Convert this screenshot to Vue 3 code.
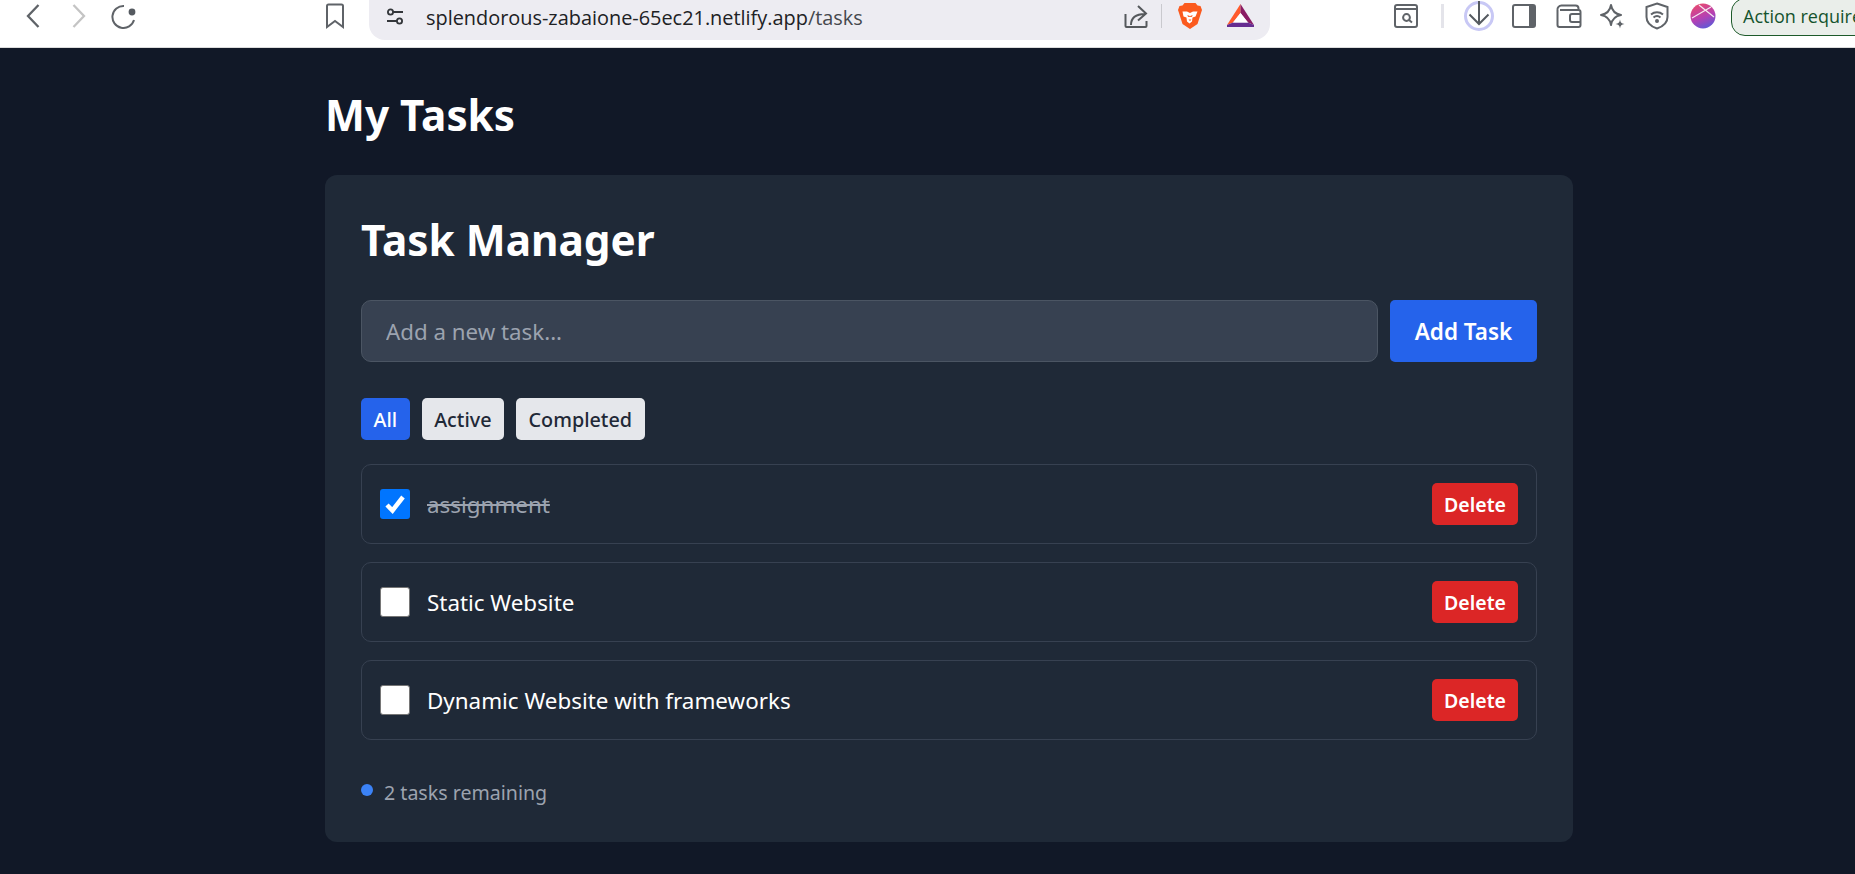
<script setup>
import { ref, computed } from 'vue';

const tasks = ref([
  { id: 1, title: 'assignment', done: true },
  { id: 2, title: 'Static Website', done: false },
  { id: 3, title: 'Dynamic Website with frameworks', done: false },
]);
const filters = ['All', 'Active', 'Completed'];
const remaining = computed(() => tasks.value.filter((t) => !t.done).length);
</script>

<template>
  <div class="page">
    <header class="chrome">
      <svg class="ic back" width="14" height="26" viewBox="0 0 14 26"><path d="M12.500 2 2 13l10.500 11" /></svg>
      <svg class="ic fwd" width="14" height="26" viewBox="0 0 14 26"><path d="M1.500 2 12 13 1.500 24" /></svg>
      <svg class="ic reload" width="26" height="26" viewBox="0 0 26 26">
        <path d="M24 17A11 11 0 1 1 14 3" />
        <circle cx="22" cy="9" r="3.400" fill="#555a60" stroke="none" />
      </svg>
      <svg class="ic mark" width="20" height="26" viewBox="0 0 20 26"><path d="M2 3a1.500 1.500 0 0 1 1.500-1.500h13A1.500 1.500 0 0 1 18 3v21l-8-6-8 6z" /></svg>
      <div class="omnibox">
        <svg class="ic tune" width="20" height="18" viewBox="0 0 20 18">
          <circle cx="5.500" cy="4" r="2.600" /><path d="M8 4h10M2 13h10" /><circle cx="14.500" cy="13" r="2.600" />
        </svg>
        <span class="url">splendorous-zabaione-65ec21.netlify.app<span class="url-path">/tasks</span></span>
        <svg class="ic share" width="24" height="26" viewBox="0 0 24 26">
          <path d="M1.500 10v12a1 1 0 0 0 1 1h19a1 1 0 0 0 1-1v-5M7 21c0-7 4-11 14-11M14 2l8 7.500-8 7" />
        </svg>
        <i class="sep"></i>
        <svg class="brave" width="24" height="28" viewBox="0 0 24 28">
          <path d="M6.500 1h11l2 2.500L22.500 4 24 8l-1 3-3.500 11-7.500 5-7.500-5L1 11 0 8l1.500-4 3 -.5z" fill="#fb5a1e" />
          <path d="M4.500 9.500 9 9.500l3 1.500 3-1.500 4.500 0-2 5-3 1-.5 4-2.500 2-2.500-2-.5-4-3-1z" fill="#fff" />
          <path d="M9 13.500h2l1 1 1-1h2l-1.500 1.500h-3zM10.500 17.500h3L12 19z" fill="#fb5a1e" />
        </svg>
        <svg class="bat" width="27" height="24" viewBox="0 0 27 24">
          <path d="M13.500 0 0 21l6-2.500 7.500-9.500z" fill="#ff5a2c" />
          <path d="M13.500 0 27 21l-6-2.500-7.500-9.500z" fill="#8a1c64" />
          <path d="M0 21l6-2.500h15l6 2.500v2H0z" fill="#662d91" />
          <path d="M13.500 9 21 18.500H6z" fill="#fff" />
        </svg>
      </div>
      <svg class="ic tabsearch" width="24" height="24" viewBox="0 0 24 24">
        <rect x="1" y="1" width="22" height="22" rx="2" /><path d="M1 5h22" /><circle cx="12.500" cy="13.500" r="3.400" /><path d="m15 16 3 2.500" />
      </svg>
      <i class="sep sep-light"></i>
      <svg class="download" width="30" height="30" viewBox="0 0 30 30">
        <circle cx="15" cy="15" r="13.500" fill="none" stroke="#c8c8f5" stroke-width="3" />
        <path d="M15 0v23M5.500 13.500 15 23l9.500-9.500" fill="none" stroke="#555a60" stroke-width="2" />
      </svg>
      <svg class="sidebar" width="24" height="24" viewBox="0 0 24 24">
        <rect x="1" y="1" width="22" height="22" rx="2" fill="#fff" stroke="#5f6368" stroke-width="2" />
        <path d="M17 1h4a2 2 0 0 1 2 2v18a2 2 0 0 1-2 2h-4z" fill="#5f6368" />
      </svg>
      <svg class="ic wallet" width="26" height="24" viewBox="0 0 26 24">
        <path d="M1.500 6a4 4 0 0 1 4-4.500h14a3 3 0 0 1 3 3V6M1.500 6v15a2 2 0 0 0 2 2h19a2 2 0 0 0 2-2V8a2 2 0 0 0-2-2H4M24.500 10H16a2 2 0 0 0-2 2v4a2 2 0 0 0 2 2h8.500" />
      </svg>
      <svg class="ic star" width="28" height="28" viewBox="0 0 28 28">
        <path d="M12 2c1 6 4 9 10 10-6 1-9 4-10 10-1-6-4-9-10-10 6-1 9-4 10-10z" stroke-linejoin="round" />
        <circle cx="21" cy="21" r="5.500" fill="#fff" stroke="none" />
        <path d="M21 16.500c.5 3 1.500 4 4.500 4.500-3 .5-4 1.500-4.500 4.500-.5-3-1.500-4-4.500-4.500 3-.5 4-1.500 4.500-4.500z" fill="#5f6368" stroke="none" />
      </svg>
      <svg class="ic shield" width="24" height="28" viewBox="0 0 24 28">
        <path d="M12 1.500 22.500 5v10c0 6-4.500 9.500-10.500 11.500C6 24.500 1.500 21 1.500 15V5z" />
        <path d="M6 12.500c3.500-3 8.500-3 12 0M8.500 15.500c2-1.700 5-1.700 7 0" /><circle cx="12" cy="19" r="1" fill="#5f6368" />
      </svg>
      <svg class="avatar" width="26" height="26" viewBox="0 0 26 26">
        <defs>
          <linearGradient id="ava" x1=".3" y1="0" x2=".7" y2="1">
            <stop offset="0" stop-color="#e84a70" /><stop offset=".55" stop-color="#b440b4" /><stop offset="1" stop-color="#5a5ad8" />
          </linearGradient>
        </defs>
        <circle cx="13" cy="13" r="12.500" fill="url(#ava)" />
        <path d="M2 15 21 4M9 2l15 12" stroke="#f5e9f0" stroke-width="1.200" />
      </svg>
      <div class="action">Action required</div>
    </header>

    <main class="main">
      <h1 class="page-title">My Tasks</h1>
      <section class="card">
        <h2 class="card-title">Task Manager</h2>
        <form class="add-row" @submit.prevent>
          <input class="add-input" type="text" placeholder="Add a new task..." />
          <button class="add-btn">Add Task</button>
        </form>
        <div class="filters">
          <button v-for="f in filters" :key="f" class="filter" :class="{ on: f === 'All' }">{{ f }}</button>
        </div>
        <ul class="list">
          <li v-for="t in tasks" :key="t.id" class="task">
            <span class="check" :class="{ checked: t.done }">
              <svg v-if="t.done" width="22" height="20" viewBox="0 0 22 20"><path d="M3 11l5.500 5.500L19 3" /></svg>
            </span>
            <span class="task-title" :class="{ done: t.done }">{{ t.title }}</span>
            <button class="del">Delete</button>
          </li>
        </ul>
        <div class="footer"><i class="dot"></i>{{ remaining }} tasks remaining</div>
      </section>
    </main>
  </div>
</template>

<style>
html, body {
  margin: 0;
  background: #111827;
  overflow: hidden;
}
</style>

<style scoped>
.page {
  width: 1855px;
  height: 874px;
  overflow: hidden;
  background: #111827;
  font-family: "Noto Sans", "Open Sans", sans-serif;
  color: #fff;
}
.chrome {
  height: 48px;
  box-sizing: border-box;
  border-bottom: 1px solid #dcdcdc;
  background: #fff;
  display: flex;
  align-items: flex-start;
  padding-left: 26px;
  overflow: hidden;
  white-space: nowrap;
}
.chrome svg {
  flex: none;
  display: block;
}
.ic {
  fill: none;
  stroke: #5f6368;
  stroke-width: 2;
}
.back { margin-top: 3px; stroke-width: 2.300; }
.fwd { margin: 3px 0 0 32px; stroke: #c4c4c4; stroke-width: 2.300; }
.reload { margin: 3px 0 0 24px; }
.mark { margin: 3px 0 0 189px; }
.omnibox {
  flex: none;
  width: 901px;
  height: 40px;
  margin-left: 24px;
  box-sizing: border-box;
  border-radius: 0 0 16px 16px;
  background: #edecf2;
  display: flex;
  align-items: center;
  padding-left: 16px;
}
.tune { stroke-width: 1.800; stroke: #33363a; margin-bottom: 6px; }
.url {
  margin: 0 0 5px 21px;
  width: 698px;
  font-size: 19.900px;
  color: #202124;
  font-family: "Open Sans", sans-serif;
}
.url-path { color: #45484d; }
.share { margin-bottom: 6px; stroke: #55585c; }
.sep {
  width: 1px;
  height: 24px;
  margin: 0 16px 9px 13px;
  background: #c9c9ce;
}
.brave { margin-bottom: 8px; }
.bat { margin: 0 0 9px 25px; }
.tabsearch { margin: 4px 0 0 124px; }
.sep-light {
  flex: none;
  width: 3px;
  margin: 4px 20px 0 23px;
  background: #e4e4ea;
}
.download { margin-top: 1px; }
.sidebar { margin: 4px 0 0 18px; }
.wallet { margin: 4px 0 0 20px; }
.star { margin: 3px 0 0 17px; }
.shield { margin: 2px 0 0 18px; }
.avatar { margin: 3px 0 0 21px; }
.action {
  flex: none;
  width: 180px;
  height: 38px;
  margin: -2px 0 0 15px;
  padding-left: 11px;
  box-sizing: border-box;
  border: 1.500px solid #1d5a2a;
  border-radius: 14px;
  background: #eaeeea;
  color: #14532d;
  font-size: 18px;
  line-height: 35px;
  font-family: "Open Sans", sans-serif;
}

.main {
  width: 1248px;
  margin-left: 325px;
}
.page-title {
  margin: 0;
  padding-top: 39px;
  font-size: 42.300px;
  line-height: 55px;
  font-weight: 700;
}
.card {
  margin-top: 33px;
  padding: 37px 36px 36px;
  height: 667px;
  box-sizing: border-box;
  background: #1f2937;
  border-radius: 12px;
}
.card-title {
  margin: 0;
  font-size: 42.300px;
  line-height: 55px;
  font-weight: 700;
}
.add-row {
  display: flex;
  gap: 12px;
  margin-top: 33px;
}
.add-input {
  flex: 1;
  height: 62px;
  box-sizing: border-box;
  padding: 0 24px;
  background: #374151;
  border: 1px solid #4b5563;
  border-radius: 10px;
  outline: none;
  font: 22.300px "Noto Sans", sans-serif;
  color: #fff;
}
.add-input::placeholder {
  color: #9ca3af;
  opacity: 1;
}
.add-btn {
  width: 147px;
  height: 62px;
  border: 0;
  border-radius: 5px;
  background: #2563eb;
  color: #fff;
  font: 600 22.500px "Noto Sans", sans-serif;
  padding: 0;
}
.filters {
  display: flex;
  gap: 12px;
  margin-top: 36px;
}
.filter {
  height: 42px;
  padding: 0 12.500px;
  border: 0;
  border-radius: 5px;
  background: #e5e7eb;
  color: #1f2937;
  font: 500 19.800px "Noto Sans", sans-serif;
}
.filter.on {
  background: #2563eb;
  color: #fff;
}
.list {
  list-style: none;
  margin: 24px 0 0;
  padding: 0;
  display: flex;
  flex-direction: column;
  gap: 18px;
}
.task {
  height: 80px;
  box-sizing: border-box;
  display: flex;
  align-items: center;
  padding: 0 18px 0 18px;
  border: 1px solid #374151;
  border-radius: 10px;
}
.check {
  flex: none;
  width: 30px;
  height: 30px;
  box-sizing: border-box;
  display: flex;
  align-items: center;
  justify-content: center;
  background: #fff;
  border: 1px solid #767676;
  border-radius: 3px;
}
.check.checked {
  background: #0075ff;
  border: 0;
}
.check svg {
  fill: none;
  stroke: #fff;
  stroke-width: 4.500;
}
.task-title {
  flex: 1;
  margin-left: 17px;
  font-size: 22.400px;
}
.task-title.done {
  color: #9ca3af;
  text-decoration: line-through;
}
.del {
  width: 86px;
  height: 42px;
  padding: 0;
  border: 0;
  border-radius: 5px;
  background: #dc2626;
  color: #fff;
  font: 600 19.500px "Noto Sans", sans-serif;
}
.footer {
  display: flex;
  align-items: center;
  margin-top: 39px;
  font-size: 19.600px;
  line-height: 28px;
  color: #9ca3af;
}
.dot {
  width: 12px;
  height: 12px;
  margin-right: 11px;
  margin-top: -6px;
  border-radius: 50%;
  background: #3b82f6;
}
</style>
